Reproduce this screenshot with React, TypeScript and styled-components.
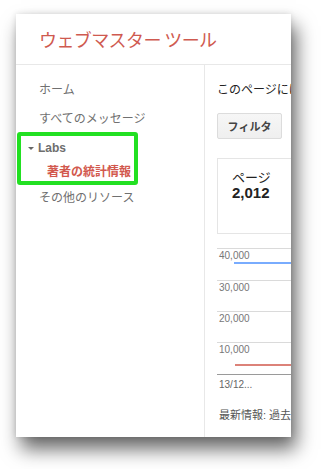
import styled, { createGlobalStyle } from 'styled-components';

const GlobalStyle = createGlobalStyle`
  html, body {
    margin: 0;
    padding: 0;
    background: #fff;
    overflow: hidden;
  }
  body {
    font-family: "Liberation Sans", "Noto Sans CJK JP", sans-serif;
  }
`;

const Stage = styled.div`
  width: 321px;
  height: 469px;
  padding: 14px 0 0 16px;
  box-sizing: border-box;
`;

const Window = styled.div`
  width: 275px;
  height: 423px;
  background: #fff;
  box-shadow: 5px 12px 18px rgba(0, 0, 0, 0.6), 0 0 6px rgba(0, 0, 0, 0.12);
  overflow: hidden;
  display: flex;
  flex-direction: column;
`;

const Header = styled.div`
  height: 50px;
  flex: none;
  border-bottom: 1px solid #e8e8e8;
  display: flex;
  align-items: center;
  padding-left: 23px;
`;

const Title = styled.h1`
  margin: 0;
  font-family: "Noto Sans CJK JP", sans-serif;
  font-size: 18px;
  font-weight: 400;
  color: #cf5a50;
  letter-spacing: -0.6px;
  white-space: nowrap;
`;

const Body = styled.div`
  flex: 1;
  display: flex;
  min-height: 0;
`;

const Sidebar = styled.nav`
  width: 189px;
  flex: none;
  border-right: 1px solid #e8e8e8;
  padding-top: 9px;
  box-sizing: border-box;
`;

const NavItem = styled.div<{ $h?: number }>`
  height: ${({ $h }) => $h ?? 29}px;
  line-height: ${({ $h }) => $h ?? 29}px;
  padding-left: 23px;
  font-family: "Noto Sans CJK JP", sans-serif;
  font-size: 12px;
  color: #707070;
  white-space: nowrap;
`;

const Highlight = styled.div`
  width: 121px;
  margin-left: 1px;
  border: 4px solid #22e022;
  border-radius: 3px;
  box-sizing: border-box;
`;

const GroupTitle = styled.div`
  height: 24px;
  display: flex;
  align-items: center;
  padding-left: 7px;
  font-size: 12px;
  font-weight: 700;
  color: #6e6e6e;
`;

const Caret = styled.span`
  width: 0;
  height: 0;
  border-left: 3px solid transparent;
  border-right: 3px solid transparent;
  border-top: 3px solid #666;
  margin-right: 4px;
`;

const SubItem = styled.div`
  height: 21px;
  line-height: 21px;
  padding-left: 26px;
  font-family: "Noto Sans CJK JP", sans-serif;
  font-size: 12px;
  font-weight: 700;
  color: #d2584d;
  white-space: nowrap;
`;

const Main = styled.main`
  flex: 1;
  min-width: 0;
  overflow: hidden;
  padding-left: 12px;
`;

const Intro = styled.div`
  margin-top: 16px;
  line-height: 16px;
  font-family: "Noto Sans CJK JP", sans-serif;
  font-size: 12px;
  color: #222;
  white-space: nowrap;
`;

const FilterButton = styled.button`
  display: block;
  margin-top: 16px;
  width: 65px;
  height: 26px;
  padding: 0;
  border: 1px solid #dcdcdc;
  border-radius: 2px;
  background: linear-gradient(#f6f6f6, #efefef);
  font-family: "Noto Sans CJK JP", sans-serif;
  font-size: 11px;
  font-weight: 700;
  color: #444;
`;

const StatCard = styled.div`
  margin-top: 19px;
  width: 200px;
  height: 76px;
  border: 1px solid #e5e5e5;
  box-sizing: border-box;
  padding: 9px 0 0 14px;
`;

const StatLabel = styled.div`
  font-family: "Noto Sans CJK JP", sans-serif;
  font-size: 13px;
  line-height: 18px;
  color: #222;
`;

const StatValue = styled.div`
  font-size: 15px;
  line-height: 14px;
  font-weight: 700;
  color: #222;
`;

const Chart = styled.div`
  position: relative;
  margin-top: 14px;
  width: 200px;
`;

const Band = styled.div<{ $h: number }>`
  height: ${({ $h }) => $h}px;
  box-sizing: border-box;
  border-top: 1px solid #dadada;
  padding: 1px 0 0 2px;
  font-size: 10px;
  line-height: 12px;
  color: #777;
`;

const Axis = styled.div`
  border-top: 1px solid #9a9a9a;
  padding: 4px 0 0 2px;
  font-size: 10px;
  line-height: 12px;
  color: #666;
`;

const Lines = styled.svg`
  position: absolute;
  left: 0;
  top: 0;
  width: 200px;
  height: 126px;
`;

const Note = styled.div`
  margin-top: 17px;
  padding-left: 2px;
  font-family: "Liberation Sans", "Noto Sans CJK JP", sans-serif;
  font-size: 11px;
  line-height: 14px;
  color: #555;
  white-space: nowrap;
`;

const ticks = ['40,000', '30,000', '20,000', '10,000'];
const bandHeights = [32, 31, 31, 32];

export default function App() {
  return (
    <>
      <GlobalStyle />
      <Stage>
        <Window>
          <Header>
            <Title>ウェブマスター ツール</Title>
          </Header>
          <Body>
            <Sidebar>
              <NavItem>ホーム</NavItem>
              <NavItem>すべてのメッセージ</NavItem>
              <Highlight>
                <GroupTitle>
                  <Caret />
                  Labs
                </GroupTitle>
                <SubItem>著者の統計情報</SubItem>
              </Highlight>
              <NavItem $h={24}>その他のリソース</NavItem>
            </Sidebar>
            <Main>
              <Intro>このページには、あなたの著者情報</Intro>
              <FilterButton>フィルタ</FilterButton>
              <StatCard>
                <StatLabel>ページ</StatLabel>
                <StatValue>2,012</StatValue>
              </StatCard>
              <Chart>
                {ticks.map((t, i) => (
                  <Band key={t} $h={bandHeights[i]}>{t}</Band>
                ))}
                <Axis>13/12...</Axis>
                <Lines viewBox="0 0 200 126">
                  <line x1="17" y1="15" x2="200" y2="15" stroke="#4d90fe" strokeWidth="1.6" />
                  <line x1="18" y1="117" x2="200" y2="117" stroke="#d0594c" strokeWidth="1.6" />
                </Lines>
              </Chart>
              <Note>最新情報: 過去の 30 日間</Note>
            </Main>
          </Body>
        </Window>
      </Stage>
    </>
  );
}
